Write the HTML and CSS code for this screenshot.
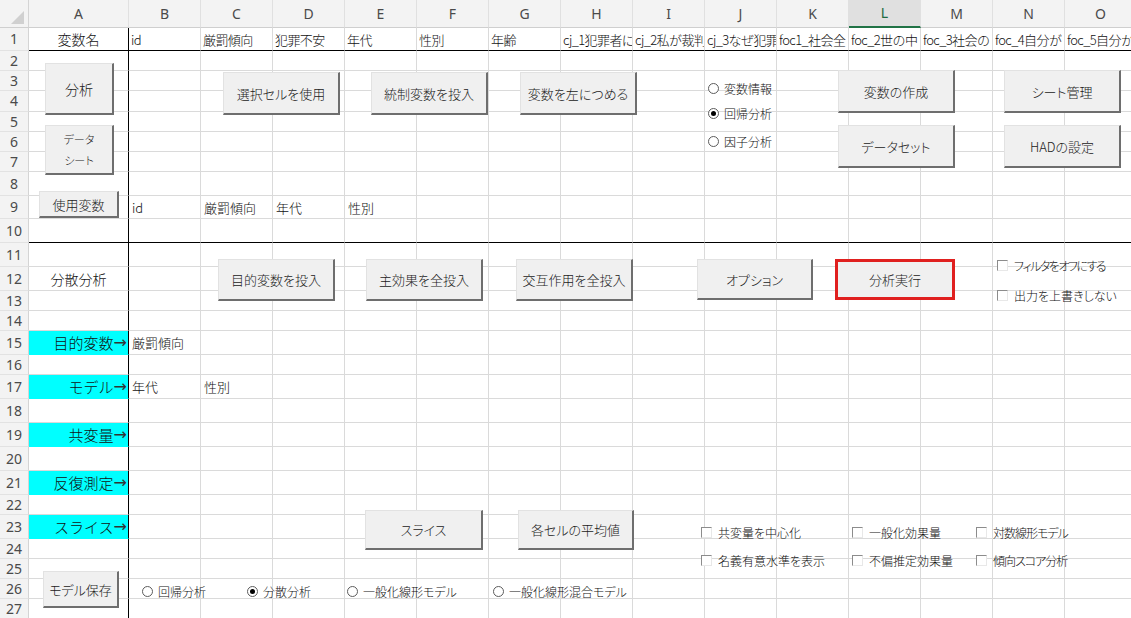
FILE: index.html
```html
<!DOCTYPE html>
<html lang="ja">
<head>
<meta charset="utf-8">
<title>HAD 分散分析</title>
<link rel="stylesheet" href="styles.css">
</head>
<body>
<div class="sheet">
  <div class="row head"><span class="corner"></span><span>A</span><span>B</span><span>C</span><span>D</span><span>E</span><span>F</span><span>G</span><span>H</span><span>I</span><span>J</span><span>K</span><span class="sel">L</span><span>M</span><span>N</span><span>O</span></div>
  <div class="row thick names"><span>1</span><span>変数名</span><span>id</span><span>厳罰傾向</span><span>犯罪不安</span><span>年代</span><span>性別</span><span>年齢</span><span>cj_1犯罪者に</span><span>cj_2私が裁判</span><span>cj_3なぜ犯罪</span><span>foc1_社会全</span><span>foc_2世の中</span><span>foc_3社会の</span><span>foc_4自分が</span><span>foc_5自分か</span></div>
  <div class="row"><span>2</span><span></span><span></span><span></span><span></span><span></span><span></span><span></span><span></span><span></span><span></span><span></span><span></span><span></span><span></span><span></span></div>
  <div class="row"><span>3</span><span></span><span></span><span></span><span></span><span></span><span></span><span></span><span></span><span></span><span></span><span></span><span></span><span></span><span></span><span></span></div>
  <div class="row"><span>4</span><span></span><span></span><span></span><span></span><span></span><span></span><span></span><span></span><span></span><span></span><span></span><span></span><span></span><span></span><span></span></div>
  <div class="row"><span>5</span><span></span><span></span><span></span><span></span><span></span><span></span><span></span><span></span><span></span><span></span><span></span><span></span><span></span><span></span><span></span></div>
  <div class="row"><span>6</span><span></span><span></span><span></span><span></span><span></span><span></span><span></span><span></span><span></span><span></span><span></span><span></span><span></span><span></span><span></span></div>
  <div class="row"><span>7</span><span></span><span></span><span></span><span></span><span></span><span></span><span></span><span></span><span></span><span></span><span></span><span></span><span></span><span></span><span></span></div>
  <div class="row"><span>8</span><span></span><span></span><span></span><span></span><span></span><span></span><span></span><span></span><span></span><span></span><span></span><span></span><span></span><span></span><span></span></div>
  <div class="row"><span>9</span><span></span><span>id</span><span>厳罰傾向</span><span>年代</span><span>性別</span><span></span><span></span><span></span><span></span><span></span><span></span><span></span><span></span><span></span><span></span></div>
  <div class="row thick"><span>10</span><span></span><span></span><span></span><span></span><span></span><span></span><span></span><span></span><span></span><span></span><span></span><span></span><span></span><span></span><span></span></div>
  <div class="row"><span>11</span><span></span><span></span><span></span><span></span><span></span><span></span><span></span><span></span><span></span><span></span><span></span><span></span><span></span><span></span><span></span></div>
  <div class="row"><span>12</span><span>分散分析</span><span></span><span></span><span></span><span></span><span></span><span></span><span></span><span></span><span></span><span></span><span></span><span></span><span></span><span></span></div>
  <div class="row"><span>13</span><span></span><span></span><span></span><span></span><span></span><span></span><span></span><span></span><span></span><span></span><span></span><span></span><span></span><span></span><span></span></div>
  <div class="row"><span>14</span><span></span><span></span><span></span><span></span><span></span><span></span><span></span><span></span><span></span><span></span><span></span><span></span><span></span><span></span><span></span></div>
  <div class="row"><span>15</span><span class="cy">目的変数<b class="arr">→</b></span><span>厳罰傾向</span><span></span><span></span><span></span><span></span><span></span><span></span><span></span><span></span><span></span><span></span><span></span><span></span><span></span></div>
  <div class="row"><span>16</span><span></span><span></span><span></span><span></span><span></span><span></span><span></span><span></span><span></span><span></span><span></span><span></span><span></span><span></span><span></span></div>
  <div class="row"><span>17</span><span class="cy">モデル<b class="arr">→</b></span><span>年代</span><span>性別</span><span></span><span></span><span></span><span></span><span></span><span></span><span></span><span></span><span></span><span></span><span></span><span></span></div>
  <div class="row"><span>18</span><span></span><span></span><span></span><span></span><span></span><span></span><span></span><span></span><span></span><span></span><span></span><span></span><span></span><span></span><span></span></div>
  <div class="row"><span>19</span><span class="cy">共変量<b class="arr">→</b></span><span></span><span></span><span></span><span></span><span></span><span></span><span></span><span></span><span></span><span></span><span></span><span></span><span></span><span></span></div>
  <div class="row"><span>20</span><span></span><span></span><span></span><span></span><span></span><span></span><span></span><span></span><span></span><span></span><span></span><span></span><span></span><span></span><span></span></div>
  <div class="row"><span>21</span><span class="cy">反復測定<b class="arr">→</b></span><span></span><span></span><span></span><span></span><span></span><span></span><span></span><span></span><span></span><span></span><span></span><span></span><span></span><span></span></div>
  <div class="row"><span>22</span><span></span><span></span><span></span><span></span><span></span><span></span><span></span><span></span><span></span><span></span><span></span><span></span><span></span><span></span><span></span></div>
  <div class="row"><span>23</span><span class="cy">スライス<b class="arr">→</b></span><span></span><span></span><span></span><span></span><span></span><span></span><span></span><span></span><span></span><span></span><span></span><span></span><span></span><span></span></div>
  <div class="row"><span>24</span><span></span><span></span><span></span><span></span><span></span><span></span><span></span><span></span><span></span><span></span><span></span><span></span><span></span><span></span><span></span></div>
  <div class="row"><span>25</span><span></span><span></span><span></span><span></span><span></span><span></span><span></span><span></span><span></span><span></span><span></span><span></span><span></span><span></span><span></span></div>
  <div class="row"><span>26</span><span></span><span></span><span></span><span></span><span></span><span></span><span></span><span></span><span></span><span></span><span></span><span></span><span></span><span></span><span></span></div>
  <div class="row"><span>27</span><span></span><span></span><span></span><span></span><span></span><span></span><span></span><span></span><span></span><span></span><span></span><span></span><span></span><span></span><span></span></div>

  <button class="btn btn-analyze">分析</button>
  <button class="btn btn-datasheet"><span>データ</span><span>シート</span></button>
  <button class="btn btn-usevars">使用変数</button>
  <button class="btn btn-selcell">選択セルを使用</button>
  <button class="btn btn-control">統制変数を投入</button>
  <button class="btn btn-shiftleft">変数を左につめる</button>
  <button class="btn btn-newvar">変数の作成</button>
  <button class="btn btn-sheetmgr">シート管理</button>
  <button class="btn btn-dataset">データセット</button>
  <button class="btn btn-had">HADの設定</button>
  <button class="btn btn-target">目的変数を投入</button>
  <button class="btn btn-main">主効果を全投入</button>
  <button class="btn btn-inter">交互作用を全投入</button>
  <button class="btn btn-option">オプション</button>
  <button class="btn btn-run">分析実行</button>
  <button class="btn btn-slice">スライス</button>
  <button class="btn btn-cellmean">各セルの平均値</button>
  <button class="btn btn-savemodel">モデル保存</button>

  <label class="opt r-varinfo"><i class="rd"></i>変数情報</label>
  <label class="opt r-reg"><i class="rd on"></i>回帰分析</label>
  <label class="opt r-factor"><i class="rd"></i>因子分析</label>

  <label class="opt kana c-filter"><i class="cb"></i>フィルタをオフにする</label>
  <label class="opt c-overwrite"><i class="cb"></i>出力を上書きしない</label>

  <label class="opt c-center"><i class="cb"></i>共変量を中心化</label>
  <label class="opt c-nominal"><i class="cb"></i>名義有意水準を表示</label>
  <label class="opt c-geneff"><i class="cb"></i>一般化効果量</label>
  <label class="opt c-unbiased"><i class="cb"></i>不偏推定効果量</label>
  <label class="opt kana c-loglin"><i class="cb"></i>対数線形モデル</label>
  <label class="opt kana c-propensity"><i class="cb"></i>傾向スコア分析</label>

  <label class="opt m-reg"><i class="rd"></i>回帰分析</label>
  <label class="opt m-anova"><i class="rd on"></i>分散分析</label>
  <label class="opt m-glm"><i class="rd"></i>一般化線形モデル</label>
  <label class="opt m-glmm"><i class="rd"></i>一般化線形混合モデル</label>
</div>
</body>
</html>
```

FILE: styles.css
```css
* { box-sizing: border-box; }
html, body { margin: 0; padding: 0; background: #fff; overflow: hidden; }
body {
  font-family: "Noto Sans CJK JP", "Noto Sans", sans-serif;
  font-size: 13px;
  font-weight: 300;
  color: #111;
}

.sheet {
  position: relative;
  width: 1137px;
  display: grid;
  grid-template-columns: 29px 100px repeat(14, 72px);
  grid-template-rows: 28px 23px 20px 20px 21px 20px 20px 20px 24px 23px 24px 24px 24px 20px 20px 24px 20px 24px 24px 24px 24px 24px 20px 24px 20px 20px 20px 20px;
}

.row { display: contents; }
.row > span {
  display: flex;
  align-items: center;
  padding: 0 3px;
  white-space: nowrap;
  overflow: hidden;
  border-right: 1px solid #dadada;
  border-bottom: 1px solid #dadada;
  line-height: 1;
}

/* variable-name row: slightly tighter so the names fit like the original */
.row.names > span:nth-child(n+3) {
  letter-spacing: -0.6px;
  padding-left: 2px;
}

/* row headers */
.row > span:first-child {
  justify-content: center;
  padding: 0;
  background: #f3f3f3;
  color: #4a4a4a;
  font-family: "Noto Sans", "Open Sans", sans-serif;
  font-weight: 400;
  font-size: 14px;
  letter-spacing: 0;
  border-right-color: #d4d4d4;
  border-bottom-color: #e2e2e2;
}

/* column A */
.row:not(.head) > span:nth-child(2) {
  justify-content: center;
  font-size: 14px;
  border-right: 1px solid #000;
}
.row:not(.head) > span.cy {
  justify-content: flex-end;
  background: #00ffff;
  border-bottom-color: #00ffff;
  padding: 0 1px 0 0;
  font-size: 15px;
}
.arr {
  display: inline-block;
  font-family: "DejaVu Sans", sans-serif;
  font-weight: 400;
  font-size: 16px;
  line-height: 1;
  color: #333;
}

/* thick horizontal separators */
.row.thick > span:not(:first-child) { border-bottom-color: #000; }

/* column header row */
.row.head > span {
  justify-content: center;
  padding: 0;
  background: #f3f3f3;
  color: #4a4a4a;
  font-family: "Noto Sans", "Open Sans", sans-serif;
  font-weight: 400;
  font-size: 14px;
  border-right-color: #e0e0e0;
  border-bottom-color: #cfcfcf;
}
.row.head > span.sel {
  background: #e0e0e0;
  color: #1e6b41;
  border-bottom: 2px solid #217346;
}
.row.head > span.corner { position: relative; border-right-color: #d4d4d4; }
.corner::after {
  content: "";
  position: absolute;
  right: 4px;
  bottom: 3px;
  width: 13px;
  height: 13px;
  background: #d0d0d0;
  clip-path: polygon(100% 0, 100% 100%, 0 100%);
}

/* form buttons over the sheet */
.btn {
  position: absolute;
  display: flex;
  align-items: center;
  justify-content: center;
  margin: 0;
  padding: 0;
  background: #f0f0f0;
  border-style: solid;
  border-width: 1px 2px 2px 1px;
  border-color: #e2e2e2 #6e6e6e #6e6e6e #e2e2e2;
  font-family: "Noto Sans CJK JP", "Noto Sans", sans-serif;
  font-feature-settings: "palt";
  font-weight: 300;
  font-size: 13px;
  color: #1a1a1a;
  line-height: 1;
}
.btn-analyze { font-size: 14px; }
.btn-datasheet { flex-direction: column; font-size: 11px; line-height: 21px; }
.btn-run { border: 3px solid #e0201f; }

.btn-analyze   { left: 45px;   top: 63px;  width: 69px;  height: 52px; }
.btn-datasheet { left: 45px;   top: 125px; width: 69px;  height: 50px; }
.btn-usevars   { left: 39px;   top: 191px; width: 80px;  height: 27px; }
.btn-selcell   { left: 223px;  top: 72px;  width: 117px; height: 43px; }
.btn-control   { left: 371px;  top: 72px;  width: 117px; height: 43px; }
.btn-shiftleft { left: 520px;  top: 72px;  width: 117px; height: 43px; }
.btn-newvar    { left: 838px;  top: 70px;  width: 117px; height: 43px; }
.btn-sheetmgr  { left: 1004px; top: 70px;  width: 117px; height: 43px; }
.btn-dataset   { left: 838px;  top: 125px; width: 117px; height: 43px; }
.btn-had       { left: 1004px; top: 125px; width: 117px; height: 43px; }
.btn-target    { left: 218px;  top: 259px; width: 117px; height: 42px; }
.btn-main      { left: 366px;  top: 259px; width: 117px; height: 42px; }
.btn-inter     { left: 516px;  top: 259px; width: 117px; height: 42px; }
.btn-option    { left: 697px;  top: 259px; width: 116px; height: 41px; }
.btn-run       { left: 835px;  top: 259px; width: 120px; height: 41px; }
.btn-slice     { left: 365px;  top: 510px; width: 118px; height: 40px; }
.btn-cellmean  { left: 518px;  top: 510px; width: 116px; height: 40px; }
.btn-savemodel { left: 43px;   top: 571px; width: 76px;  height: 37px; }

/* option buttons and check boxes */
.opt {
  position: absolute;
  display: flex;
  align-items: center;
  gap: 5px;
  height: 16px;
  font-size: 12px;
  font-feature-settings: "palt";
  white-space: nowrap;
  color: #111;
}
.opt.kana { letter-spacing: -1px; }
.opt.c-filter { letter-spacing: -1.5px; }
.rd {
  position: relative;
  flex: none;
  width: 11px;
  height: 11px;
  border: 1px solid #5c5c5c;
  border-radius: 50%;
  background: #fff;
}
.rd.on::after {
  content: "";
  position: absolute;
  left: 2px;
  top: 2px;
  width: 5px;
  height: 5px;
  border-radius: 50%;
  background: #000;
}
.cb {
  flex: none;
  width: 11px;
  height: 11px;
  margin-right: 1px;
  border: 1px solid;
  border-color: #8c8c8c #e8e8e8 #e8e8e8 #8c8c8c;
  background: #fff;
}

.r-varinfo    { left: 708px; top: 80px; }
.r-reg        { left: 708px; top: 105px; }
.r-factor     { left: 708px; top: 133px; }
.c-filter     { left: 997px; top: 257px; }
.c-overwrite  { left: 997px; top: 287px; }
.c-center     { left: 701px; top: 524px; }
.c-nominal    { left: 701px; top: 552px; }
.c-geneff     { left: 852px; top: 524px; }
.c-unbiased   { left: 852px; top: 552px; }
.c-loglin     { left: 976px; top: 524px; }
.c-propensity { left: 976px; top: 552px; }
.m-reg        { left: 142px; top: 583px; }
.m-anova      { left: 247px; top: 583px; }
.m-glm        { left: 347px; top: 583px; }
.m-glmm       { left: 493px; top: 583px; }
```
